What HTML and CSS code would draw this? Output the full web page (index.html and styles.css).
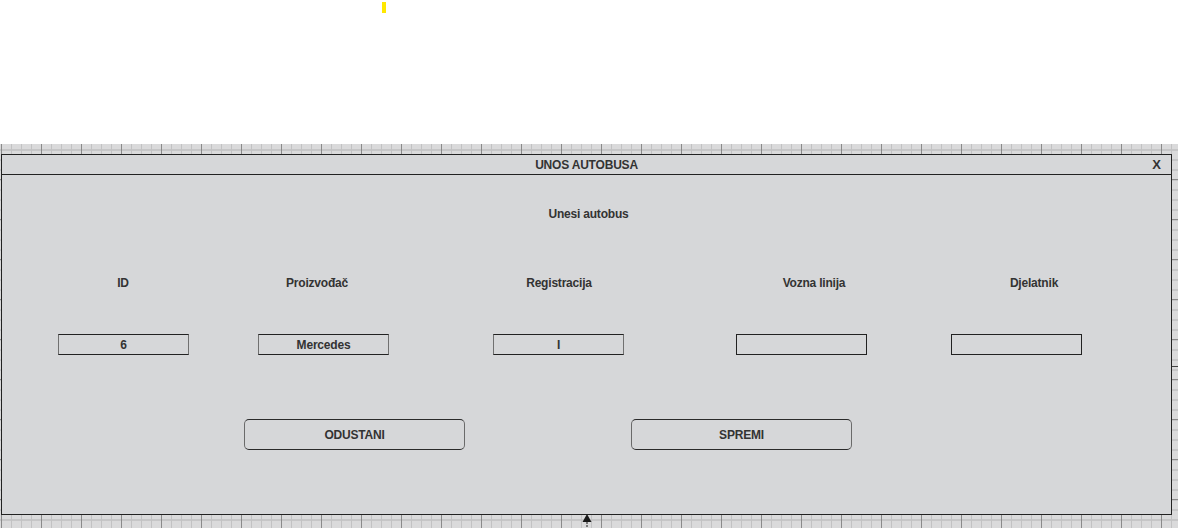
FILE: index.html
```html
<!DOCTYPE html>
<html lang="hr">
<head>
<meta charset="utf-8">
<title>Unos autobusa</title>
<link rel="stylesheet" href="styles.css">
</head>
<body>
<div class="page">
  <div class="top-area">
    <span class="cursor-mark"></span>
  </div>
  <div class="canvas">
    <div class="window">
      <div class="titlebar">
        <span></span>
        <span class="title">UNOS AUTOBUSA</span>
        <span class="close">X</span>
      </div>
      <div class="content">
        <div class="heading">Unesi autobus</div>
        <div class="labels">
          <span class="label l1">ID</span>
          <span class="label l2">Proizvođač</span>
          <span class="label l3">Registracija</span>
          <span class="label l4">Vozna linija</span>
          <span class="label l5">Djelatnik</span>
        </div>
        <div class="inputs">
          <div class="field f1 filled">6</div>
          <div class="field f2 filled">Mercedes</div>
          <div class="field f3 filled">I</div>
          <div class="field f4"></div>
          <div class="field f5"></div>
        </div>
        <div class="buttons">
          <div class="btn b1">ODUSTANI</div>
          <div class="btn b2">SPREMI</div>
        </div>
      </div>
    </div>
    <div class="anchor-arrow">
      <svg width="10" height="14" viewBox="0 0 10 14">
        <polygon points="5,0 9.5,8 0.5,8" fill="#1a1a1a"/>
        <line x1="5" y1="8" x2="5" y2="14" stroke="#1a1a1a" stroke-width="1" stroke-dasharray="2,1"/>
      </svg>
    </div>
    <div class="side-mark"></div>
  </div>
</div>
</body>
</html>
```

FILE: styles.css
```css
* { box-sizing: border-box; }

html, body {
  margin: 0;
  padding: 0;
  background: #ffffff;
}

body {
  font-family: "Liberation Sans", Arial, sans-serif;
  font-size: 12px;
  font-weight: bold;
  color: #333333;
}

.page {
  width: 1178px;
  height: 528px;
  overflow: hidden;
  position: relative;
}

.top-area {
  height: 144px;
  position: relative;
}

.cursor-mark {
  position: absolute;
  left: 382px;
  top: 2px;
  width: 4px;
  height: 11px;
  background: #ffe800;
}

.canvas {
  position: relative;
  height: 384px;
  padding-top: 10px;
  padding-left: 1px;
  background-color: #dadadb;
  background-image:
    linear-gradient(to right, #8a8a8a 1px, transparent 1px),
    linear-gradient(to bottom, #8a8a8a 1px, transparent 1px),
    linear-gradient(to right, #c2c2c3 1px, transparent 1px),
    linear-gradient(to bottom, #c6c6c7 2px, transparent 2px);
  background-size: 40px 40px, 40px 40px, 10px 10px, 10px 10px;
  background-position: 1px 0, 0 35px, 1px 0, 0 5px;
}

.window {
  width: 1171px;
  height: 361px;
  border: 1px solid #222222;
  background: #d6d7d9;
  display: flex;
  flex-direction: column;
}

.titlebar {
  height: 20px;
  border-bottom: 1px solid #222222;
  display: grid;
  grid-template-columns: 1fr auto 1fr;
  align-items: center;
  padding-right: 10px;
  padding-left: 10px;
}

.title {
  font-size: 12px;
  line-height: 14px;
  letter-spacing: -0.2px;
}

.close {
  justify-self: end;
  font-size: 13px;
  line-height: 14px;
}

.content {
  flex: 1;
  display: flex;
  flex-direction: column;
  padding-top: 32px;
}

.heading {
  text-align: center;
  line-height: 14px;
  padding-left: 4px;
  letter-spacing: -0.2px;
}

.labels {
  display: flex;
  margin-top: 55px;
  line-height: 14px;
}

.label {
  width: 160px;
  text-align: center;
  letter-spacing: -0.2px;
}

.l1 { margin-left: 41px; }
.l2 { margin-left: 34px; }
.l3 { margin-left: 82px; }
.l4 { margin-left: 95px; }
.l5 { margin-left: 60px; }

.inputs {
  display: flex;
  margin-top: 44px;
}

.field {
  width: 131px;
  height: 21px;
  border: 1px solid #222222;
  display: flex;
  align-items: center;
  justify-content: center;
  line-height: 14px;
  letter-spacing: -0.2px;
}

.field.filled {
  border-left-color: #707070;
  border-right-color: #707070;
}

.f1 { margin-left: 56px; }
.f2 { margin-left: 69px; }
.f3 { margin-left: 104px; }
.f4 { margin-left: 112px; }
.f5 { margin-left: 84px; }

.buttons {
  display: flex;
  margin-top: 64px;
}

.btn {
  width: 221px;
  height: 31px;
  border: 1px solid #2a2a2a;
  border-left-color: #6a6a6a;
  border-right-color: #6a6a6a;
  border-radius: 5px;
  display: flex;
  align-items: center;
  justify-content: center;
  letter-spacing: -0.2px;
}

.b1 { margin-left: 242px; }
.b2 { margin-left: 166px; }

.anchor-arrow {
  position: absolute;
  left: 582px;
  top: 370px;
  width: 10px;
  height: 14px;
  display: flex;
}

.side-mark {
  position: absolute;
  left: 1172px;
  top: 222px;
  width: 6px;
  height: 1px;
  border-top: 1px dashed #444444;
}
```
